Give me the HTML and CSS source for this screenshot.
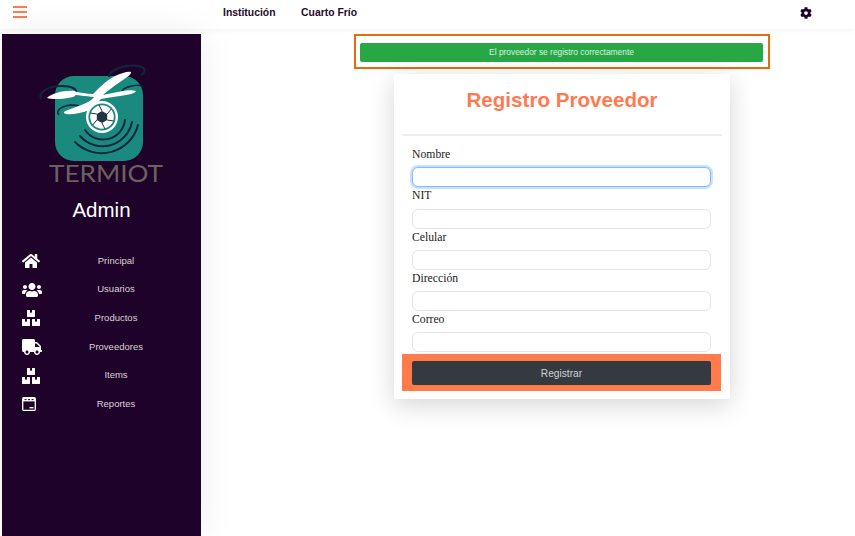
FILE: index.html
```html
<!DOCTYPE html>
<html lang="es">
<head>
<meta charset="utf-8">
<title>Registro Proveedor</title>
<link rel="stylesheet" href="styles.css">
</head>
<body>
<svg class="sprites" aria-hidden="true">
  <symbol id="i-boxes" viewBox="0 0 576 512"><path d="M560 288h-80v96l-32-21.3-32 21.3v-96h-80c-8.8 0-16 7.2-16 16v192c0 8.8 7.2 16 16 16h224c8.8 0 16-7.2 16-16V304c0-8.8-7.2-16-16-16zm-384-64h224c8.8 0 16-7.2 16-16V16c0-8.8-7.2-16-16-16h-80v96l-32-21.3L256 96V0h-80c-8.8 0-16 7.2-16 16v192c0 8.8 7.2 16 16 16zm64 64h-80v96l-32-21.3L96 384v-96H16c-8.8 0-16 7.2-16 16v192c0 8.8 7.2 16 16 16h224c8.8 0 16-7.2 16-16V304c0-8.8-7.2-16-16-16z"/></symbol>
</svg>
<header class="topbar">
  <button class="burger" aria-label="Menú"><span></span><span></span><span></span></button>
  <nav class="topnav"><a>Institución</a><a>Cuarto Frío</a></nav>
  <svg class="gear" viewBox="0 0 512 512"><path d="M487.4 315.7l-42.6-24.6c4.3-23.2 4.3-47 0-70.2l42.6-24.6c4.9-2.8 7.1-8.6 5.5-14-11.1-35.6-30-67.8-54.7-94.6-3.8-4.1-10-5.1-14.8-2.3L380.8 110c-17.9-15.4-38.5-27.3-60.8-35.1V25.8c0-5.6-3.9-10.5-9.4-11.7-36.7-8.2-74.3-7.8-109.2 0-5.5 1.2-9.4 6.1-9.4 11.7V75c-22.2 7.9-42.8 19.8-60.8 35.1L88.7 85.5c-4.9-2.8-11-1.9-14.8 2.3-24.7 26.7-43.6 58.9-54.7 94.6-1.7 5.4.6 11.2 5.5 14L67.3 221c-4.3 23.2-4.3 47 0 70.2l-42.6 24.6c-4.9 2.8-7.1 8.6-5.5 14 11.1 35.6 30 67.8 54.7 94.6 3.8 4.1 10 5.1 14.8 2.3l42.6-24.6c17.9 15.4 38.5 27.3 60.8 35.1v49.2c0 5.6 3.9 10.5 9.4 11.7 36.7 8.2 74.3 7.8 109.2 0 5.5-1.2 9.4-6.1 9.4-11.7v-49.2c22.2-7.9 42.8-19.8 60.8-35.1l42.6 24.6c4.9 2.8 11 1.9 14.8-2.3 24.7-26.7 43.6-58.9 54.7-94.6 1.5-5.5-.7-11.3-5.6-14.1zM256 336c-44.1 0-80-35.9-80-80s35.9-80 80-80 80 35.9 80 80-35.9 80-80 80z"/></svg>
</header>
<div class="layout">
  <aside class="sidebar">
    <svg class="logo" viewBox="0 0 140 140">
      <rect x="25" y="21" width="88" height="85" rx="19" fill="#1a8a7e"/>
      <g fill="none" stroke="#10263c">
        <path d="M79 22C80 14 96 9 108 11c8 1 8 6 3 9" stroke-width="2"/>
        <path d="M11 44C8 37 18 31 32 31c10 0 15 3 14 7" stroke-width="2"/>
        <path d="M92 36c2-4 14-7 21-5" stroke-width="1.6"/>
        <path d="M29 60c-4-4 2-9 12-10 3 0 6 0 8 1" stroke-width="1.6"/>
        <g stroke-width="2" stroke-linecap="round">
          <path d="M108 70A37.500 37.500 0 0 1 45 87"/>
          <path d="M102 67A30 30 0 0 1 50 81"/>
          <path d="M95 65A22 22 0 0 1 55 75"/>
        </g>
      </g>
      <g fill="#fff">
        <path d="M17 43c4-4 16-8 28-7 2 2 1 5-2 6-8 2-20 3-26 1z"/>
        <path d="M41 36c8 1 16 3 22 3 7-7 14-14 22-18 7-3 13-5 16-4 1 2-5 6-11 10-7 5-13 9-17 13 6-1 13-3 20-4 4-1 10-1 13 0 0 2-8 4-16 5-7 1-14 2-19 3-4 5-9 9-14 12-7 2-15 4-21 3-4-1-2-3 2-4 7-3 15-5 20-8 3-2 5-3 6-5-8-1-17-2-23-2z"/>
      </g>
      <circle cx="72" cy="62" r="16" fill="#fff"/>
      <circle cx="72" cy="62" r="13.600" fill="#1a8a7e"/>
      <circle cx="72" cy="62" r="11.800" fill="#fff"/>
      <path d="M72 56l5.200 3v6l-5.200 3-5.200-3v-6z" fill="#26343f"/>
      <path d="M72 56l-3-6M77.200 59l4-5M77.200 65l6.500 1M72 68l3 6M66.800 65l-4 5M66.800 59l-6.500-1" stroke="#26343f" stroke-width="1" fill="none"/>
      <text class="logo-word" x="19" y="127" textLength="114" lengthAdjust="spacingAndGlyphs">TERMIOT</text>
    </svg>
    <h2 class="role">Admin</h2>
    <ul class="menu">
      <li class="menu-row"><svg class="ic ic-home" viewBox="0 0 576 512"><path d="M280.37 148.26L96 300.11V464a16 16 0 0 0 16 16l112.06-.29a16 16 0 0 0 15.92-16V368a16 16 0 0 1 16-16h64a16 16 0 0 1 16 16v95.64a16 16 0 0 0 16 16.05L464 480a16 16 0 0 0 16-16V300L295.67 148.26a12.19 12.19 0 0 0-15.3 0zM571.6 251.47L488 182.56V44.05a12 12 0 0 0-12-12h-56a12 12 0 0 0-12 12v72.61L318.47 43a48 48 0 0 0-61 0L4.34 251.47a12 12 0 0 0-1.6 16.9l25.5 31A12 12 0 0 0 45.15 301l235.22-193.74a12.19 12.19 0 0 1 15.3 0L530.9 301a12 12 0 0 0 16.9-1.6l25.5-31a12 12 0 0 0-1.7-16.93z"/></svg><span>Principal</span></li>
      <li class="menu-row"><svg class="ic ic-wide" viewBox="0 0 640 512"><path d="M96 224c35.3 0 64-28.7 64-64s-28.7-64-64-64-64 28.7-64 64 28.7 64 64 64zm448 0c35.3 0 64-28.7 64-64s-28.7-64-64-64-64 28.7-64 64 28.7 64 64 64zm32 32h-64c-17.6 0-33.5 7.1-45.1 18.6 40.3 22.1 68.9 62 75.1 109.4h66c17.7 0 32-14.3 32-32v-32c0-35.3-28.7-64-64-64zm-256 0c61.9 0 112-50.1 112-112S381.9 32 320 32 208 82.1 208 144s50.1 112 112 112zm76.8 32h-8.3c-20.8 10-43.9 16-68.5 16s-47.6-6-68.5-16h-8.3C179.6 288 128 339.6 128 403.2V432c0 26.5 21.5 48 48 48h288c26.5 0 48-21.5 48-48v-28.8c0-63.6-51.6-115.2-115.2-115.2zm-223.7-13.4C161.5 263.1 145.6 256 128 256H64c-35.3 0-64 28.7-64 64v32c0 17.7 14.3 32 32 32h65.9c6.3-47.4 34.9-87.3 75.2-109.4z"/></svg><span>Usuarios</span></li>
      <li class="menu-row"><svg class="ic ic-home"><use href="#i-boxes"/></svg><span>Productos</span></li>
      <li class="menu-row"><svg class="ic ic-wide" viewBox="0 0 640 512"><path d="M624 352h-16V243.9c0-12.7-5.1-24.9-14.1-33.9L494 110.1c-9-9-21.2-14.1-33.9-14.1H416V48c0-26.5-21.5-48-48-48H48C21.5 0 0 21.5 0 48v320c0 26.5 21.5 48 48 48h16c0 53 43 96 96 96s96-43 96-96h128c0 53 43 96 96 96s96-43 96-96h48c8.8 0 16-7.2 16-16v-32c0-8.8-7.2-16-16-16zM160 464c-26.5 0-48-21.5-48-48s21.5-48 48-48 48 21.5 48 48-21.5 48-48 48zm320 0c-26.5 0-48-21.5-48-48s21.5-48 48-48 48 21.5 48 48-21.5 48-48 48zm80-208H416V144h44.1l99.9 99.9V256z"/></svg><span>Proveedores</span></li>
      <li class="menu-row"><svg class="ic ic-home"><use href="#i-boxes"/></svg><span>Items</span></li>
      <li class="menu-row"><svg class="ic ic-report" viewBox="0 0 14 14"><rect x="0.7" y="0.7" width="12.6" height="12.6" rx="1" fill="none" stroke="#fff" stroke-width="1.3"/><path d="M1 1h12v3.400H1z"/><path d="M2.500 2.600h2M6 2.600h2M9.500 2.600h2" stroke="#1f0229" stroke-width="1"/><path d="M7.500 10h4v1.400h-4z"/></svg><span>Reportes</span></li>
    </ul>
  </aside>
  <main class="content">
    <div class="notice"><div class="alert">El proveedor se registro correctamente</div></div>
    <section class="card">
      <h1 class="title">Registro Proveedor</h1>
      <form class="form">
        <div class="field"><label class="label">Nombre</label><input class="input is-focus" type="text"></div>
        <div class="field"><label class="label">NIT</label><input class="input" type="text"></div>
        <div class="field"><label class="label">Celular</label><input class="input" type="text"></div>
        <div class="field"><label class="label">Dirección</label><input class="input" type="text"></div>
        <div class="field"><label class="label">Correo</label><input class="input" type="text"></div>
      </form>
      <div class="actions"><button class="submit" type="button">Registrar</button></div>
    </section>
  </main>
</div>
</body>
</html>
```
FILE: styles.css
```css
* { box-sizing: border-box; }
html, body { height: 100%; }
body {
  margin: 0;
  background: #fff;
  font-family: "Liberation Sans", Arial, sans-serif;
  overflow: hidden;
}
.sprites { display: none; }

.topbar {
  height: 29px;
  display: flex;
  align-items: center;
  background: #fff;
  box-shadow: 0 1px 6px rgba(0, 0, 0, .05);
  padding-left: 13px;
}
.burger {
  width: 14px;
  height: 12px;
  padding: 0;
  margin: -6px 0 0;
  border: 0;
  background: none;
  display: flex;
  flex-direction: column;
  justify-content: space-between;
}
.burger span { display: block; height: 2px; background: #ff7b4f; }
.topnav {
  display: flex;
  gap: 25.5px;
  margin-left: 196px;
  margin-top: -4px;
  font-size: 10.4px;
  font-weight: 700;
  color: #1f0a2b;
}
.gear { width: 12px; height: 12px; margin: -4px 0 0 443px; fill: #1f0229; }

.layout {
  display: flex;
  height: 507px;
  padding: 5px 0 0 2px;
}
.sidebar {
  width: 199px;
  flex: none;
  background: #1f0229;
  color: #fff;
  padding-top: 21px;
  box-shadow: 0 0 34px rgba(0, 0, 0, .08);
}
.logo { display: block; width: 140px; height: 140px; margin-left: 28px; }
.logo-word {
  font-family: "Lato", "Liberation Sans", sans-serif;
  font-weight: 400;
  font-size: 24px;
  fill: #6b625f;
}
.role {
  margin: 3px 0 0;
  font-size: 20.500px;
  line-height: 23px;
  font-weight: 400;
  text-align: center;
}
.menu { list-style: none; margin: 25px 0 0; padding: 0; }
.menu-row {
  height: 28.6px;
  display: grid;
  grid-template-columns: 18px 1fr;
  align-items: center;
  padding: 0 9px 0 20px;
  font-size: 9.5px;
  color: #d8d3da;
}
.menu-row span { text-align: center; }
.ic { fill: #fff; display: block; margin-top: 2px; }
.ic-home { width: 18px; height: 16px; }
.ic-wide { width: 20px; height: 16px; }
.ic-report { width: 14px; height: 14px; }

.content {
  flex: 1;
  display: flex;
  flex-direction: column;
  padding-left: 153px;
}
.notice {
  width: 416px;
  height: 35px;
  border: 2px solid #e56b0c;
  padding: 7px 5px 5px 4px;
}
.alert {
  height: 19px;
  border-radius: 2px;
  background: #28a745;
  color: #dcefe0;
  font-size: 8.4px;
  line-height: 19px;
  text-align: center;
}
.card {
  width: 336px;
  height: 325px;
  margin: 5px 0 0 40px;
  padding: 0 8px;
  background: #fff;
  border-radius: 2px;
  box-shadow: 0 6px 26px rgba(0, 0, 0, .17);
}
.title {
  height: 62px;
  margin: 0;
  border-bottom: 2px solid #eee;
  color: #ff7b4f;
  font-size: 20.6px;
  font-weight: 700;
  line-height: 52px;
  text-align: center;
}
.form { padding: 10px 10px 0; }
.field { height: 41.25px; }
.label {
  display: block;
  height: 21.25px;
  font-family: "Liberation Serif", "Times New Roman", serif;
  font-size: 11.7px;
  line-height: 18px;
  color: #222;
}
.input {
  display: block;
  width: 299px;
  height: 20px;
  padding: 0 8px;
  background: #fff;
  border: 1px solid #e2e4ea;
  border-radius: 6px;
  outline: none;
}
.is-focus {
  border-color: #80bdff;
  box-shadow: 0 0 0 2px rgba(128, 189, 255, .45);
}
.actions {
  width: 319px;
  height: 37px;
  margin-top: 2px;
  padding: 7px 10px 0;
  background: #ff7b4b;
}
.submit {
  display: block;
  width: 299px;
  height: 24px;
  padding: 0;
  border: 0;
  border-radius: 2px;
  background: #343a40;
  color: #cfd0d2;
  font-family: "Liberation Sans", Arial, sans-serif;
  font-size: 10.2px;
}
```
